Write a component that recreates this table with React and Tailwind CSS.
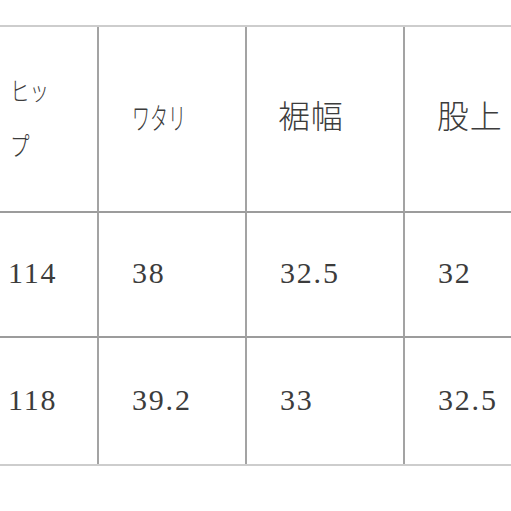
const rows = [
  ["114", "38", "32.5", "32"],
  ["118", "39.2", "33", "32.5"],
];

const jp = { fontFamily: '"Noto Sans CJK JP", sans-serif' };
const num = { fontFamily: '"Liberation Serif", "Times New Roman", serif' };

export default function App() {
  return (
    <div className="h-[511px] w-[511px] overflow-hidden bg-white pt-[25px]">
      <div className="grid w-[620px] grid-cols-[99px_148px_158px_215px] grid-rows-[186px_125px_126px] border-y-2 border-t-[#cdcdcd] border-b-[#cdcdcd] text-[#3c3c3c]">
        {/* header */}
        <div className="flex items-center border-r-2 border-b-2 border-r-[#a3a3a3] border-b-[#9c9c9c] pl-[10px]">
          <span className="w-[54px] origin-left scale-x-75 pb-[4px] text-[26px] font-light leading-[55px]" style={jp}>
            ヒップ
          </span>
        </div>
        <div className="flex items-center border-r-2 border-b-2 border-r-[#a3a3a3] border-b-[#9c9c9c] pl-[33px]">
          <span className="origin-left scale-x-60 pb-[6px] text-[30px] font-light" style={jp}>
            ワタリ
          </span>
        </div>
        <div className="flex items-center border-r-2 border-b-2 border-r-[#a3a3a3] border-b-[#9c9c9c] pl-[31px]">
          <span className="pb-[10px] text-[32px] font-light tracking-[0.02em]" style={jp}>
            裾幅
          </span>
        </div>
        <div className="flex items-center border-b-2 border-b-[#9c9c9c] pl-[32px]">
          <span className="pb-[10px] text-[32px] font-light tracking-[0.02em]" style={jp}>
            股上
          </span>
        </div>

        {rows.map((r, i) =>
          r.map((v, j) => (
            <div
              key={i + "-" + j}
              className={
                "flex items-center " +
                (j < 3 ? "border-r-2 border-r-[#a3a3a3] " : "") +
                (i === 0 ? "border-b-2 border-b-[#9c9c9c] " : "") +
                (j === 0 ? "pl-[8px]" : "pl-[33px]")
              }
            >
              <span className="pb-[4px] text-[30px] tracking-[0.06em]" style={num}>
                {v}
              </span>
            </div>
          ))
        )}
      </div>
    </div>
  );
}
